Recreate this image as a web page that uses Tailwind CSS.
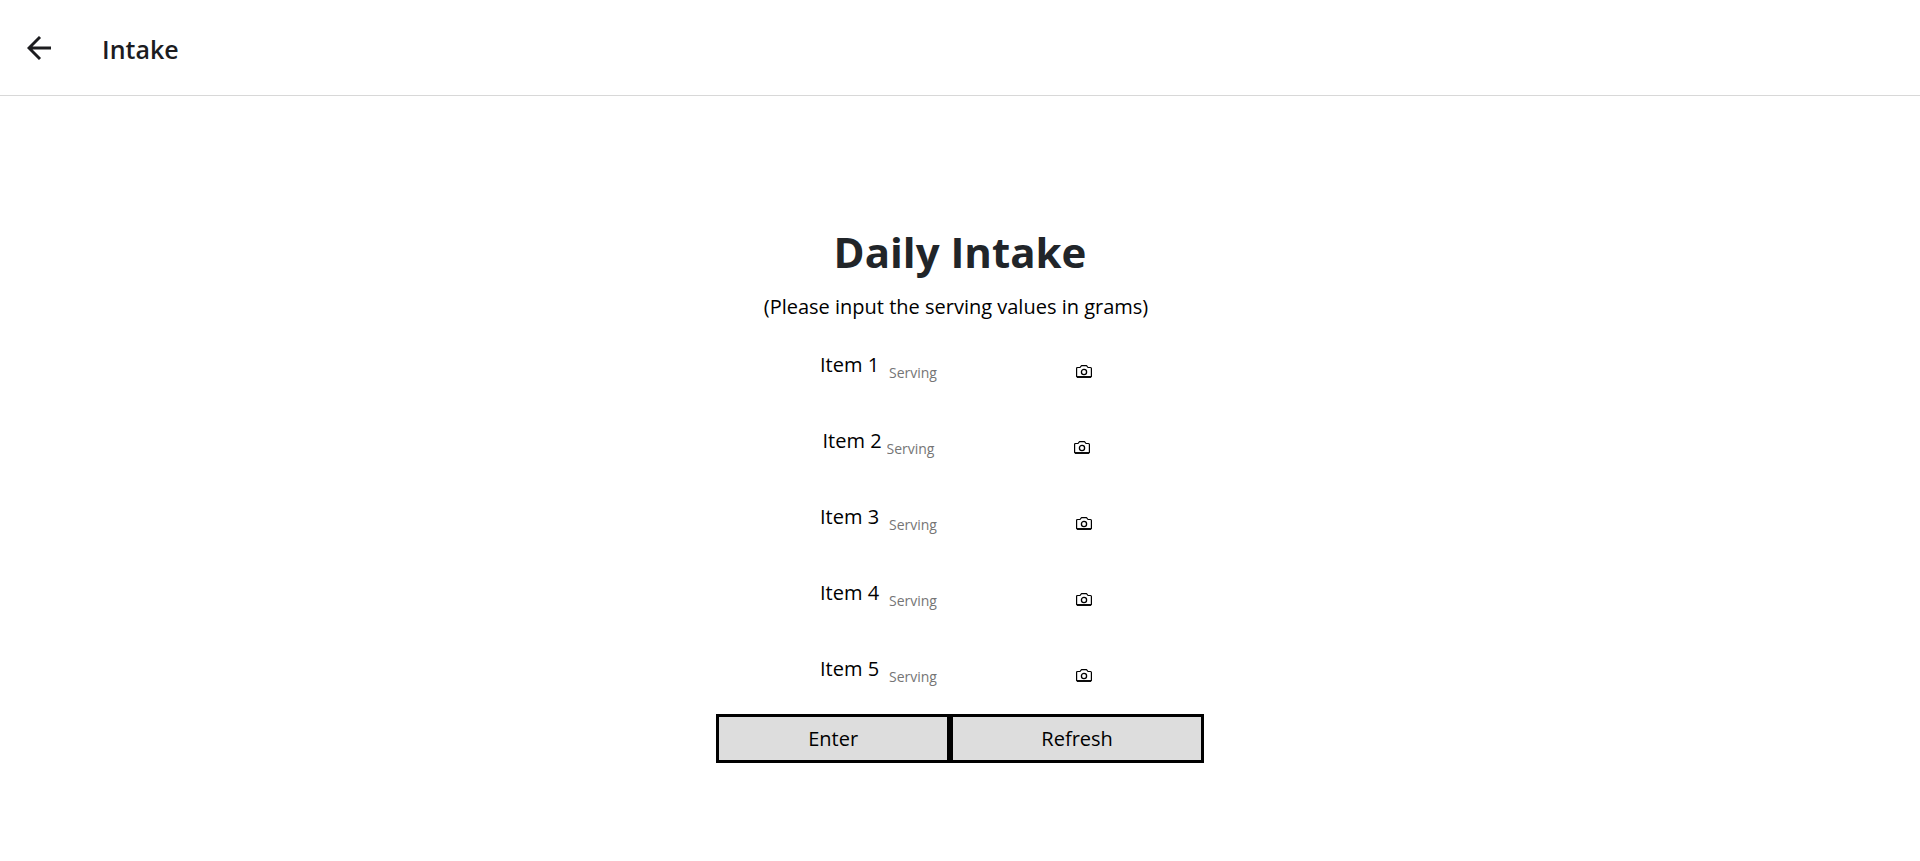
<!DOCTYPE html>
<html lang="en">
<head>
<meta charset="utf-8">
<meta name="viewport" content="width=device-width, initial-scale=1">
<title>Intake</title>
<script src="https://cdn.jsdelivr.net/npm/@tailwindcss/browser@4"></script>
</head>
<body class="min-h-screen bg-white font-['Segoe_UI','Open_Sans',sans-serif] text-black">
<svg class="hidden" aria-hidden="true">
  <symbol id="camera" viewBox="0 0 16 13"><path d="M.6 3.5Q.6 2.5 1.5 2.5H4L5.5 .6H10.5L12 2.5H14.5Q15.4 2.5 15.4 3.5V11.5Q15.4 12 14.5 12H1.5Q.6 12 .6 11.5Z" fill="none" stroke="currentColor" stroke-width="1.2" stroke-linejoin="round"/><path d="M1 12H15" stroke="currentColor" stroke-width="1.8"/><circle cx="8" cy="7" r="2.6" fill="none" stroke="currentColor" stroke-width="1.3"/></symbol>
</svg>
<header class="flex h-24 items-center gap-[51px] border-b border-[#d8d8d8] pl-[27px]">
  <a href="#" aria-label="Back" class="block"><svg class="size-6 text-[#1c1c1f]" viewBox="0 0 24 24" fill="none" stroke="currentColor" stroke-width="2.9"><path d="M24 12H2M13 1L2 12L13 23"/></svg></a>
  <h2 class="pt-0.5 text-[25px] leading-8 font-semibold text-[#1c1c1f]">Intake</h2>
</header>
<main class="mx-auto flex w-full max-w-[488px] flex-col pt-[124px]">
  <h1 class="text-center text-[42px] leading-[64px] font-bold text-[#212529]">Daily Intake</h1>
  <form>
    <div class="pr-2 pb-[27px]">
      <p class="pt-2 pb-7 text-center text-[20px] leading-[30px]">(Please input the serving values in grams)</p>
      <div class="flex h-[76px] items-start justify-center gap-[9px]">
        <label for="s1" class="w-[60px] whitespace-nowrap text-[20px] leading-[30px]">Item 1</label>
        <div class="flex items-center pt-[10px]"><input id="s1" placeholder="Serving" class="h-[23px] w-[187px] pt-0.5 text-[14px] outline-none placeholder:text-[#757575]"><button type="button" aria-label="Photograph item 1"><svg class="h-[13px] w-4"><use href="#camera"/></svg></button></div>
      </div>
      <div class="flex h-[76px] items-start justify-center gap-1">
        <label for="s2" class="w-[60px] whitespace-nowrap text-[20px] leading-[30px]">Item 2</label>
        <div class="flex items-center pt-[10px]"><input id="s2" placeholder="Serving" class="h-[23px] w-[187px] pt-0.5 text-[14px] outline-none placeholder:text-[#757575]"><button type="button" aria-label="Photograph item 2"><svg class="h-[13px] w-4"><use href="#camera"/></svg></button></div>
      </div>
      <div class="flex h-[76px] items-start justify-center gap-[9px]">
        <label for="s3" class="w-[60px] whitespace-nowrap text-[20px] leading-[30px]">Item 3</label>
        <div class="flex items-center pt-[10px]"><input id="s3" placeholder="Serving" class="h-[23px] w-[187px] pt-0.5 text-[14px] outline-none placeholder:text-[#757575]"><button type="button" aria-label="Photograph item 3"><svg class="h-[13px] w-4"><use href="#camera"/></svg></button></div>
      </div>
      <div class="flex h-[76px] items-start justify-center gap-[9px]">
        <label for="s4" class="w-[60px] whitespace-nowrap text-[20px] leading-[30px]">Item 4</label>
        <div class="flex items-center pt-[10px]"><input id="s4" placeholder="Serving" class="h-[23px] w-[187px] pt-0.5 text-[14px] outline-none placeholder:text-[#757575]"><button type="button" aria-label="Photograph item 4"><svg class="h-[13px] w-4"><use href="#camera"/></svg></button></div>
      </div>
      <div class="flex items-start justify-center gap-[9px]">
        <label for="s5" class="w-[60px] whitespace-nowrap text-[20px] leading-[30px]">Item 5</label>
        <div class="flex items-center pt-[10px]"><input id="s5" placeholder="Serving" class="h-[23px] w-[187px] pt-0.5 text-[14px] outline-none placeholder:text-[#757575]"><button type="button" aria-label="Photograph item 5"><svg class="h-[13px] w-4"><use href="#camera"/></svg></button></div>
      </div>
    </div>
    <div class="flex">
      <button type="submit" class="h-[49px] w-12/25 border-3 border-black bg-[#ddd] text-[20px] leading-[30px]">Enter</button>
      <button type="reset" class="h-[49px] flex-1 border-3 border-black bg-[#ddd] text-[20px] leading-[30px]">Refresh</button>
    </div>
  </form>
</main>
</body>
</html>
